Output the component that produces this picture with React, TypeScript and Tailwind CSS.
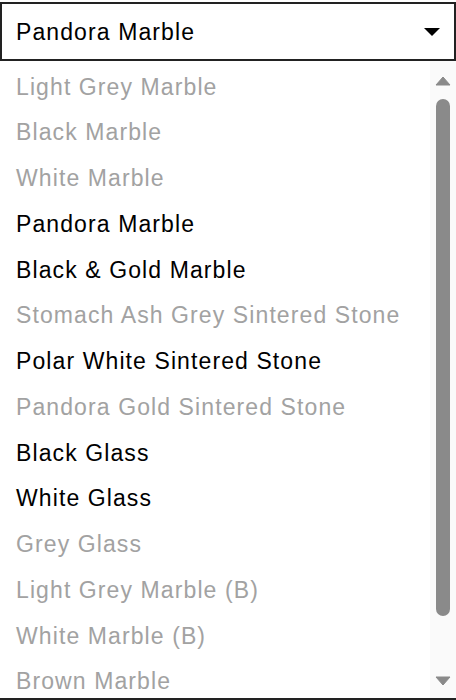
import React from "react";

const options: { label: string; active: boolean }[] = [
  { label: "Light Grey Marble", active: false },
  { label: "Black Marble", active: false },
  { label: "White Marble", active: false },
  { label: "Pandora Marble", active: true },
  { label: "Black & Gold Marble", active: true },
  { label: "Stomach Ash Grey Sintered Stone", active: false },
  { label: "Polar White Sintered Stone", active: true },
  { label: "Pandora Gold Sintered Stone", active: false },
  { label: "Black Glass", active: true },
  { label: "White Glass", active: true },
  { label: "Grey Glass", active: false },
  { label: "Light Grey Marble (B)", active: false },
  { label: "White Marble (B)", active: false },
  { label: "Brown Marble", active: false },
];

export default function App() {
  return (
    <div
      className="w-[456px] h-[700px] overflow-hidden bg-white flex flex-col pt-[2px]"
      style={{ fontFamily: '"Liberation Sans", Arial, sans-serif' }}
    >
      {/* select box */}
      <div className="h-[59px] shrink-0 border-2 border-[#222] flex items-center justify-between pl-[14px] pr-[14px] pt-[2px]">
        <span className="text-[23px] tracking-[1.1px] text-black">Pandora Marble</span>
        <svg width="16" height="9" viewBox="0 0 16 9">
          <path d="M0 0 H16 L8 8 Z" fill="#000" />
        </svg>
      </div>

      {/* options list */}
      <div className="flex-1 flex border-b-2 border-[#222] min-h-0">
        <ul className="flex-1 overflow-hidden pt-[3px]">
          {options.map((o) => (
            <li
              key={o.label}
              className={
                "h-[45.75px] flex items-center pl-[16px] text-[23px] tracking-[1.1px] whitespace-nowrap " +
                (o.active ? "text-black" : "text-[#a2a2a2]")
              }
            >
              {o.label}
            </li>
          ))}
        </ul>
        <div className="w-[26px] shrink-0 bg-[#fafafa] flex flex-col items-center pt-[15px] pb-[12px]">
          <svg width="16" height="10" viewBox="0 0 16 10">
            <path d="M8 1 L15 9 H1 Z" fill="#8a8a8a" stroke="#8a8a8a" strokeLinejoin="round" />
          </svg>
          <div className="mt-[13px] w-[14px] h-[517px] rounded-full bg-[#8a8a8a]" />
          <div className="flex-1" />
          <svg width="16" height="10" viewBox="0 0 16 10">
            <path d="M1 1 H15 L8 9 Z" fill="#8a8a8a" stroke="#8a8a8a" strokeLinejoin="round" />
          </svg>
        </div>
      </div>
    </div>
  );
}
